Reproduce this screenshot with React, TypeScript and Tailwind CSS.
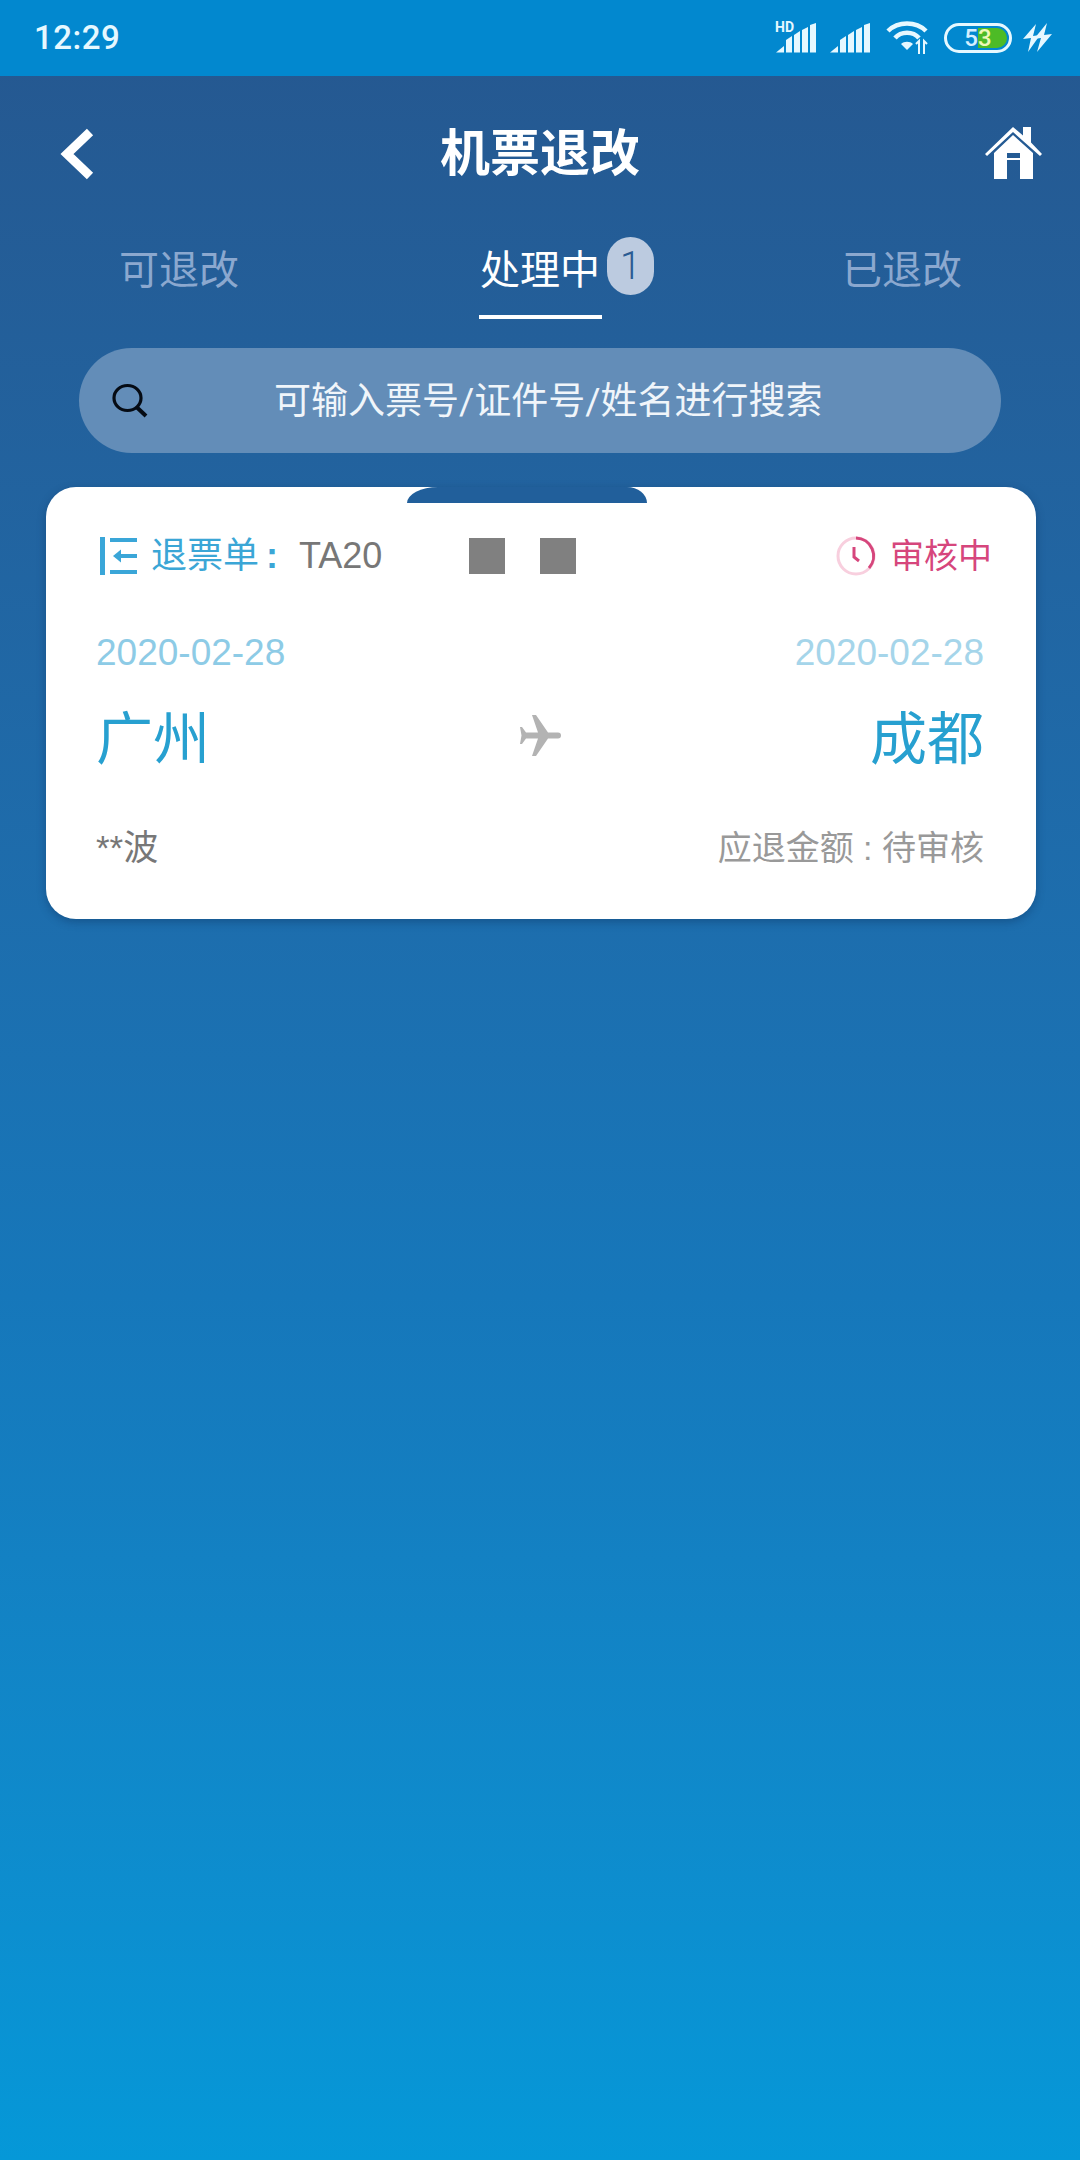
import React from "react";

function SignalBars() {
  return (
    <svg className="block" width="41" height="30" viewBox="0 0 41 30" fill="#e6f8ff">
      <path d="M0 29.5 L8 23 V29.5 Z" />
      <path d="M10 29.5 V17 L16 13 V29.5 Z" />
      <path d="M18 29.5 V12 L24 8 V29.5 Z" />
      <path d="M26 29.5 V7 L32 4 V29.5 Z" />
      <path d="M34 29.5 V2 L40 0 V29.5 Z" />
    </svg>
  );
}

export default function App() {
  return (
    <div className="flex h-[2160px] w-[1080px] flex-col overflow-hidden bg-gradient-to-b from-[#25578f] via-[#1677ba] via-60% to-[#0598d8] font-['Roboto','Noto_Sans_CJK_SC',sans-serif]">
      {/* status bar */}
      <div className="flex h-[76px] shrink-0 items-center justify-between bg-[#0288cf] pl-[34px] pr-[27px] text-[#e6f8ff]">
        <span className="text-[33px] font-medium tracking-[0.5px]">12:29</span>
        <div className="flex items-center">
          <div className="relative h-[30px] w-[41px]">
            <span className="absolute left-[-1px] top-[-3px] text-[14px] font-bold leading-[14px]">HD</span>
            <SignalBars />
          </div>
          <div className="ml-[13px] h-[30px]"><SignalBars /></div>
          <svg className="ml-[15px]" width="44" height="34" viewBox="0 0 44 34" fill="none" stroke="#e6f8ff" strokeWidth="4.5">
            <path d="M2 10 C12 0 30 0 40 10" />
            <path d="M9 17 C15 10 27 10 33 17" />
            <path d="M15 23 L21 29 L27 23 C24 20 18 20 15 23 Z" fill="#e6f8ff" stroke="none" />
            <path d="M31 23l3-3v13M39 33v-13l3 3" strokeWidth="2" transform="translate(-1 0)" />
          </svg>
          <div className="relative ml-[14px] flex h-[30px] w-[68px] items-center justify-center rounded-full border-[3px] border-[#e6f8ff]">
            <div className="absolute bottom-[2px] left-[2px] right-[2px] top-[2px] flex justify-end">
              <div className="h-full w-[29px] rounded-r-full bg-[#4dbb26]" />
            </div>
            <span className="relative text-[24px] font-medium leading-none">
              <span className="text-[#d4efff]">5</span>
              <span className="text-[#eef8b8]">3</span>
            </span>
          </div>
          <svg className="ml-[11px]" width="30" height="30" viewBox="0 0 30 30" fill="#e6f8ff">
            <path d="M13 1 L0 16 L8 15 L5 29 L17 12 L10 13 Z" />
            <path d="M24 0 L11 16 L18 15 L14 29 L29 11 L21 12 Z" />
          </svg>
        </div>
      </div>

      {/* header */}
      <div className="relative flex h-[154px] shrink-0 items-center justify-center">
        <svg className="absolute left-[58px] top-[52px]" width="38" height="52" viewBox="0 0 38 52" fill="none" stroke="#fff" strokeWidth="9">
          <path d="M32 4 L9 26 L32 48" />
        </svg>
        <h1 className="pt-[2px] text-[50px] font-bold leading-none text-white">机票退改</h1>
        <svg className="absolute left-[985px] top-[51px]" width="57" height="52" viewBox="0 0 57 52" fill="#fff">
          <path d="M28 0 L38 8.5 V0 H46 V15.5 L57 27 L55 29 L28 5 L2 29 L0 27 Z" />
          <path fillRule="evenodd" d="M28 8 L48 26 V52 H35 V33 H22 V52 H9 V26 Z M22 26 H35 V31 H22 Z" />
        </svg>
      </div>

      {/* tabs */}
      <div className="flex h-[89px] shrink-0 pl-[119px] text-[40px] leading-[82px]">
        <span className="w-[361px] text-[#8ba8cf]">可退改</span>
        <div className="relative h-[89px] w-[362px] text-white">
          <span className="block w-[120px]">处理中</span>
          <div className="w-[123px] -translate-x-[1px] border-b-[4px] border-white pt-[3px]" />
          <span className="absolute left-[127px] top-[7px] flex h-[58px] w-[47px] items-center justify-center rounded-full bg-[#bccbe0] text-[38px] font-light leading-none text-[#2a5b93]">1</span>
        </div>
        <span className="text-[#8ba8cf]">已退改</span>
      </div>

      {/* search */}
      <div className="ml-[79px] mt-[29px] flex h-[105px] w-[922px] shrink-0 items-center rounded-full bg-[#638db8] pl-[33px]">
        <svg width="36" height="36" viewBox="0 0 36 36" fill="none" stroke="#050b14" strokeWidth="3.2">
          <ellipse cx="15.5" cy="15" rx="13.5" ry="12.5" />
          <path d="M25 24.5 L34 33" strokeWidth="4" />
        </svg>
        <span className="ml-[126px] pt-[2px] text-[37px] leading-none text-[#f0f5fa]">可输入票号/证件号/姓名进行搜索</span>
      </div>

      {/* card */}
      <div className="relative ml-[46px] mt-[34px] h-[432px] w-[990px] shrink-0 rounded-[30px] bg-white pl-[50px] pr-[52px] pt-[49px] font-['Liberation_Sans','Noto_Sans_CJK_SC',sans-serif] shadow-[0_3px_8px_rgba(10,40,80,0.35)]">
        <div className="absolute left-[361px] top-0 h-[16px] w-[240px] bg-[#215f9b] [border-radius:31px_20px_0_0/16px_16px_0_0]" />
        <div className="flex h-[40px] items-center">
          <svg className="ml-[4px]" width="38" height="38" viewBox="0 0 38 38" fill="#3aa6d8">
            <rect x="0" y="0" width="5" height="38" />
            <rect x="10" y="1" width="27" height="4" />
            <rect x="10" y="33" width="27" height="4" />
            <rect x="18" y="17" width="19" height="4" />
            <path d="M13 19 L21 12.5 V25.5 Z" />
          </svg>
          <span className="ml-[13px] w-[148px] text-[36px] leading-none text-[#3ba6d6]">
            退票单<span className="ml-[7px] font-bold">:</span>
          </span>
          <span className="text-[36px] leading-none text-[#777777]">TA20</span>
          <div className="ml-[87px] h-[36px] w-[36px] bg-[#808080]" />
          <div className="ml-[35px] h-[36px] w-[36px] bg-[#808080]" />
          <svg className="ml-auto" width="40" height="40" viewBox="0 0 40 40" fill="none" strokeWidth="3">
            <circle cx="20" cy="20" r="18" stroke="#f8cfde" />
            <path d="M20 2 A18 18 0 0 1 33 32" stroke="#d6467c" />
            <path d="M18 11 V21 L23 25" stroke="#d6467c" />
          </svg>
          <span className="-mr-[8px] ml-[14px] text-[34px] leading-none text-[#d6467c]">审核中</span>
        </div>

        <div className="mt-[55px] flex justify-between text-[37px] leading-[44px]">
          <span className="text-[#8dcbe6]">2020-02-28</span>
          <span className="text-[#a5d5ea]">2020-02-28</span>
        </div>

        <div className="mt-[24px] flex h-[80px] items-center justify-between text-[57px] leading-none text-[#27a0d0]">
          <span>广州</span>
          <svg className="mb-[8px]" width="44" height="43" viewBox="0 0 44 43" fill="#b3b3b3">
            <path d="M2 13 H4 L8 18.5 H20 L14 1 H18 L30 18.5 H40 Q43 18.5 43 21.5 Q43 24.5 40 24.5 H30 L18 42 H14 L20 24.5 H8 L4 30 H2 L3.5 21.5 Z" />
          </svg>
          <span>成都</span>
        </div>

        <div className="mt-[47px] flex items-center justify-between leading-[44px]">
          <span className="text-[35px] text-[#777777]">**波</span>
          <span className="text-[34px] text-[#999999]">应退金额 : 待审核</span>
        </div>
      </div>
    </div>
  );
}
